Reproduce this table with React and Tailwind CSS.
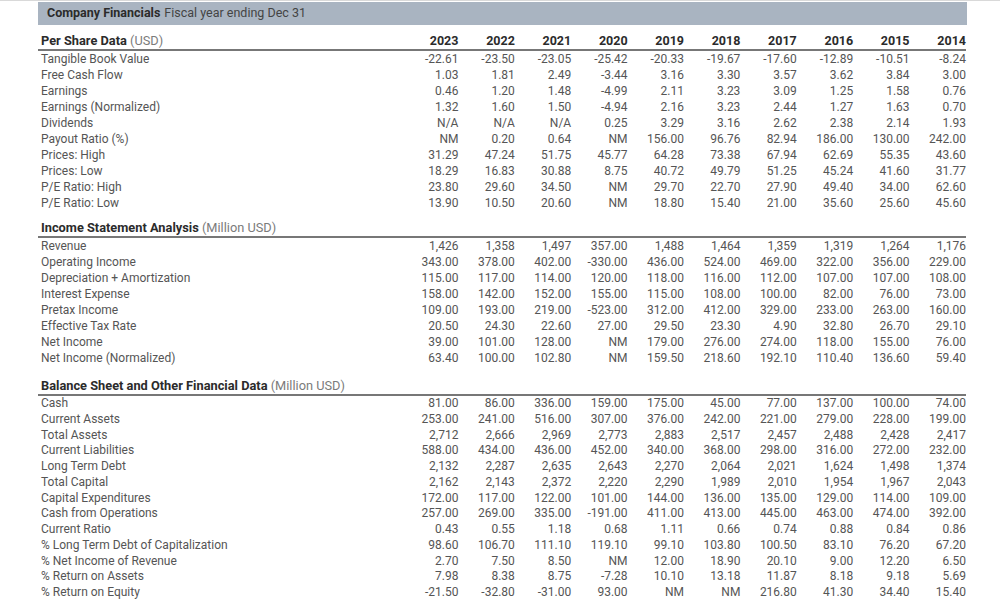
const YEARS = ["2023", "2022", "2021", "2020", "2019", "2018", "2017", "2016", "2015", "2014"];

const SECTIONS = [
  {
    title: "Per Share Data",
    unit: "(USD)",
    showYears: true,
    gap: "h-[8px]",
    rowH: "h-[16px] leading-[16px]",
    rows: [
      ["Tangible Book Value", "-22.61", "-23.50", "-23.05", "-25.42", "-20.33", "-19.67", "-17.60", "-12.89", "-10.51", "-8.24"],
      ["Free Cash Flow", "1.03", "1.81", "2.49", "-3.44", "3.16", "3.30", "3.57", "3.62", "3.84", "3.00"],
      ["Earnings", "0.46", "1.20", "1.48", "-4.99", "2.11", "3.23", "3.09", "1.25", "1.58", "0.76"],
      ["Earnings (Normalized)", "1.32", "1.60", "1.50", "-4.94", "2.16", "3.23", "2.44", "1.27", "1.63", "0.70"],
      ["Dividends", "N/A", "N/A", "N/A", "0.25", "3.29", "3.16", "2.62", "2.38", "2.14", "1.93"],
      ["Payout Ratio (%)", "NM", "0.20", "0.64", "NM", "156.00", "96.76", "82.94", "186.00", "130.00", "242.00"],
      ["Prices: High", "31.29", "47.24", "51.75", "45.77", "64.28", "73.38", "67.94", "62.69", "55.35", "43.60"],
      ["Prices: Low", "18.29", "16.83", "30.88", "8.75", "40.72", "49.79", "51.25", "45.24", "41.60", "31.77"],
      ["P/E Ratio: High", "23.80", "29.60", "34.50", "NM", "29.70", "22.70", "27.90", "49.40", "34.00", "62.60"],
      ["P/E Ratio: Low", "13.90", "10.50", "20.60", "NM", "18.80", "15.40", "21.00", "35.60", "25.60", "45.60"],
    ],
  },
  {
    title: "Income Statement Analysis",
    unit: "(Million USD)",
    gap: "h-[9px]",
    rowH: "h-[16px] leading-[16px]",
    rows: [
      ["Revenue", "1,426", "1,358", "1,497", "357.00", "1,488", "1,464", "1,359", "1,319", "1,264", "1,176"],
      ["Operating Income", "343.00", "378.00", "402.00", "-330.00", "436.00", "524.00", "469.00", "322.00", "356.00", "229.00"],
      ["Depreciation + Amortization", "115.00", "117.00", "114.00", "120.00", "118.00", "116.00", "112.00", "107.00", "107.00", "108.00"],
      ["Interest Expense", "158.00", "142.00", "152.00", "155.00", "115.00", "108.00", "100.00", "82.00", "76.00", "73.00"],
      ["Pretax Income", "109.00", "193.00", "219.00", "-523.00", "312.00", "412.00", "329.00", "233.00", "263.00", "160.00"],
      ["Effective Tax Rate", "20.50", "24.30", "22.60", "27.00", "29.50", "23.30", "4.90", "32.80", "26.70", "29.10"],
      ["Net Income", "39.00", "101.00", "128.00", "NM", "179.00", "276.00", "274.00", "118.00", "155.00", "76.00"],
      ["Net Income (Normalized)", "63.40", "100.00", "102.80", "NM", "159.50", "218.60", "192.10", "110.40", "136.60", "59.40"],
    ],
  },
  {
    title: "Balance Sheet and Other Financial Data",
    unit: "(Million USD)",
    gap: "h-[12px]",
    rowH: "h-[15.75px] leading-[15.75px]",
    rows: [
      ["Cash", "81.00", "86.00", "336.00", "159.00", "175.00", "45.00", "77.00", "137.00", "100.00", "74.00"],
      ["Current Assets", "253.00", "241.00", "516.00", "307.00", "376.00", "242.00", "221.00", "279.00", "228.00", "199.00"],
      ["Total Assets", "2,712", "2,666", "2,969", "2,773", "2,883", "2,517", "2,457", "2,488", "2,428", "2,417"],
      ["Current Liabilities", "588.00", "434.00", "436.00", "452.00", "340.00", "368.00", "298.00", "316.00", "272.00", "232.00"],
      ["Long Term Debt", "2,132", "2,287", "2,635", "2,643", "2,270", "2,064", "2,021", "1,624", "1,498", "1,374"],
      ["Total Capital", "2,162", "2,143", "2,372", "2,220", "2,290", "1,989", "2,010", "1,954", "1,967", "2,043"],
      ["Capital Expenditures", "172.00", "117.00", "122.00", "101.00", "144.00", "136.00", "135.00", "129.00", "114.00", "109.00"],
      ["Cash from Operations", "257.00", "269.00", "335.00", "-191.00", "411.00", "413.00", "445.00", "463.00", "474.00", "392.00"],
      ["Current Ratio", "0.43", "0.55", "1.18", "0.68", "1.11", "0.66", "0.74", "0.88", "0.84", "0.86"],
      ["% Long Term Debt of Capitalization", "98.60", "106.70", "111.10", "119.10", "99.10", "103.80", "100.50", "83.10", "76.20", "67.20"],
      ["% Net Income of Revenue", "2.70", "7.50", "8.50", "NM", "12.00", "18.90", "20.10", "9.00", "12.20", "6.50"],
      ["% Return on Assets", "7.98", "8.38", "8.75", "-7.28", "10.10", "13.18", "11.87", "8.18", "9.18", "5.69"],
      ["% Return on Equity", "-21.50", "-32.80", "-31.00", "93.00", "NM", "NM", "216.80", "41.30", "34.40", "15.40"],
    ],
  },
];

function Section({ section }) {
  return (
    <>
      {/* spacer before section */}
      <tr>
        <td colSpan={11} className={section.gap + " p-0"} />
      </tr>
      {/* section heading */}
      <tr className="h-[16px] border-b-2 border-[#777]">
        <td className="p-0 pl-[3px] leading-[16px] whitespace-nowrap text-[12.8px]">
          <span className="font-bold text-[#2b2b2b]">{section.title}</span>{" "}
          <span className="text-[#7b7b7b]">{section.unit}</span>
        </td>
        {YEARS.map((y) => (
          <td key={y} className="p-0 text-right leading-[16px] font-bold text-[12.5px] text-[#2b2b2b]">
            {section.showYears ? y : ""}
          </td>
        ))}
      </tr>
      {section.rows.map((row) => (
        <tr key={row[0]} className={section.rowH}>
          <td className={"p-0 pl-[3px] whitespace-nowrap " + section.rowH}>{row[0]}</td>
          {row.slice(1).map((v, i) => (
            <td key={i} className={"p-0 text-right tabular-nums whitespace-nowrap " + section.rowH}>
              {v}
            </td>
          ))}
        </tr>
      ))}
    </>
  );
}

export default function App() {
  return (
    <div className="w-[1000px] h-[614px] bg-white overflow-hidden border-t border-[#d9d9d9] font-['Roboto',sans-serif] text-[12px] text-[#555]">
      {/* ===== Title bar ===== */}
      <div className="ml-[38px] mt-[1px] w-[929px] h-[23px] bg-[#a9b4c1] flex items-center pl-[9px] text-[12.5px]">
        <span className="font-bold text-[#2b2b2b]">Company Financials</span>
        <span className="ml-[4px] text-[#444]">Fiscal year ending Dec 31</span>
      </div>

      {/* ===== Table ===== */}
      <table className="ml-[38px] w-[928px] table-fixed border-collapse">
        <colgroup>
          <col className="w-[364px]" />
          {YEARS.map((y) => (
            <col key={y} className="w-[56.4px]" />
          ))}
        </colgroup>
        <tbody>
          {SECTIONS.map((s) => (
            <Section key={s.title} section={s} />
          ))}
        </tbody>
      </table>
    </div>
  );
}
